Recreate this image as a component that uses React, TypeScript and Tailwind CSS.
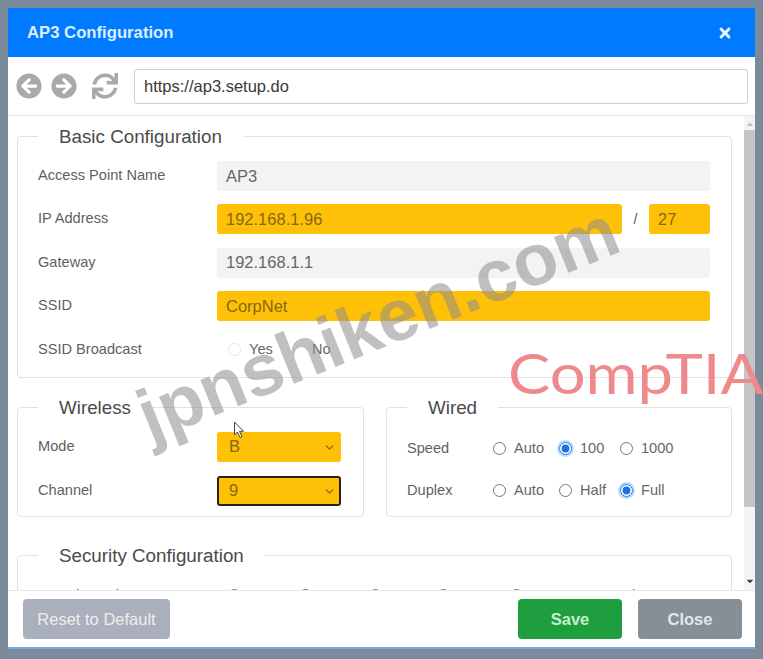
import { ChevronDown } from 'lucide-react';
import { FaArrowCircleLeft, FaArrowCircleRight, FaSync, FaTimes, FaCaretUp, FaCaretDown } from 'react-icons/fa';

const YELLOW = 'bg-[#ffc107] text-[#85680f]';

function Field({ value, className }: { value: string; className: string }) {
  return (
    <input
      readOnly
      value={value}
      className={`h-[30px] rounded-[3px] px-[9px] text-[16.5px] outline-none ${className}`}
    />
  );
}

function Row({ label, children }: { label: string; children: React.ReactNode }) {
  return (
    <div className="flex h-[30px] items-center">
      <label className="w-[179px] shrink-0 text-[14.6px] text-[#5f5f5f]">{label}</label>
      {children}
    </div>
  );
}

function Group({ title, children, className = '' }: { title: string; children: React.ReactNode; className?: string }) {
  return (
    <fieldset className={`rounded border border-[#e2e2e2] ${className}`}>
      <legend className="px-[21px] text-[18.8px] leading-[27px] text-[#4a4a4a]">{title}</legend>
      {children}
    </fieldset>
  );
}

function Radio({ label, checked, width, name, faint }: { label: string; checked?: boolean; width: string; name: string; faint?: boolean }) {
  return (
    <label className={`flex items-center gap-[8px] whitespace-nowrap text-[14.6px] text-[#666] ${width}`}>
      <span className={`flex shrink-0 rounded-full ${checked ? 'ring-2 ring-[#bcdcfb]' : ''}`}>
        <input
          type="radio"
          name={name}
          defaultChecked={checked}
          className={`m-0 size-[13px] accent-[#1a73e8] ${faint ? 'opacity-20' : ''}`}
        />
      </span>
      {label}
    </label>
  );
}

function Select({ value, focused }: { value: string; focused?: boolean }) {
  return (
    <div className="relative">
      <select
        defaultValue={value}
        className={`h-[30px] w-[124px] appearance-none rounded-[3px] text-[16.5px] outline-none ${YELLOW} ${focused ? 'border-2 border-[#2b2413] pl-[10px]' : 'pl-[12px]'}`}
      >
        <option>{value}</option>
      </select>
      <ChevronDown className="pointer-events-none absolute right-[5px] top-[9px] size-[13px] text-[#85680f]" strokeWidth={2.5} />
    </div>
  );
}

export default function App() {
  return (
    <div className="relative h-[659px] w-[763px] overflow-hidden bg-[#7b8b9b] pl-[8px] pr-[8px] pt-[8px] font-['Liberation_Sans',Arial,sans-serif]">
      <div className="flex h-[641px] flex-col overflow-hidden border-b-2 border-[#74abdc] bg-white">
        <header className="flex h-[49px] shrink-0 items-center justify-between bg-[#007bff] pl-[19px] pr-[22px]">
          <h1 className="text-[16.7px] font-bold text-[#dcefff]">AP3 Configuration</h1>
          <FaTimes className="size-[16px] text-[#eef6ff]" />
        </header>

        <div className="flex h-[59px] shrink-0 items-center border-b border-[#e5e5e5] pl-[8px] pr-[7px]">
          <FaArrowCircleLeft className="size-[26px] text-[#a9a9a9]" />
          <FaArrowCircleRight className="ml-[9px] size-[26px] text-[#a9a9a9]" />
          <FaSync className="ml-[15px] size-[26px] text-[#a9a9a9]" />
          <input
            readOnly
            value="https://ap3.setup.do"
            className="ml-[16px] h-[35px] flex-1 rounded-[3px] border border-[#cfcfcf] px-[9px] text-[16.5px] text-[#3a3a3a] outline-none"
          />
        </div>

        <div className="flex min-h-0 flex-1">
          <div className="min-w-0 flex-1 overflow-hidden pl-[9px] pr-[12px] pt-[7px]">
            <Group title="Basic Configuration" className="pb-[12px] pl-[20px] pr-[21px] pt-[11px]">
              <div className="flex flex-col gap-[13.4px]">
                <Row label="Access Point Name">
                  <Field value="AP3" className="flex-1 bg-[#f3f3f3] text-[#666]" />
                </Row>
                <Row label="IP Address">
                  <Field value="192.168.1.96" className={`w-[405px] ${YELLOW}`} />
                  <span className="w-[27px] text-center text-sm text-[#555]">/</span>
                  <Field value="27" className={`w-[61px] ${YELLOW}`} />
                </Row>
                <Row label="Gateway">
                  <Field value="192.168.1.1" className="flex-1 bg-[#f3f3f3] text-[#666]" />
                </Row>
                <Row label="SSID">
                  <Field value="CorpNet" className={`flex-1 ${YELLOW}`} />
                </Row>
                <Row label="SSID Broadcast">
                  <div className="flex pl-[11px]">
                    <Radio name="broadcast" label="Yes" width="w-[84px]" faint />
                    <span className="text-[14.6px] text-[#666]">No</span>
                  </div>
                </Row>
              </div>
            </Group>

            <div className="mt-[16px] grid grid-cols-[347px_346px] gap-[22px]">
              <Group title="Wireless" className="px-[20px] pb-[10px] pt-[11px]">
                <div className="flex flex-col gap-[14px]">
                  <Row label="Mode"><Select value="B" /></Row>
                  <Row label="Channel"><Select value="9" focused /></Row>
                </div>
              </Group>
              <Group title="Wired" className="px-[20px] pb-[8px] pt-[13px]">
                <div className="flex flex-col gap-[12px]">
                  <Row label="Speed">
                    <div className="-ml-[93px] flex">
                      <Radio name="speed" label="Auto" width="w-[66px]" />
                      <Radio name="speed" label="100" width="w-[61px]" checked />
                      <Radio name="speed" label="1000" width="w-[60px]" />
                    </div>
                  </Row>
                  <Row label="Duplex">
                    <div className="-ml-[93px] flex">
                      <Radio name="duplex" label="Auto" width="w-[66px]" />
                      <Radio name="duplex" label="Half" width="w-[61px]" />
                      <Radio name="duplex" label="Full" width="w-[60px]" checked />
                    </div>
                  </Row>
                </div>
              </Group>
            </div>

            <Group title="Security Configuration" className="mt-[25px] px-[20px] pb-[13px] pt-[12px]">
              <Row label="Security Style">
                <div className="flex pl-[11px]">
                  <Radio name="style" label="None" width="w-[71px]" />
                  <Radio name="style" label="WEP" width="w-[70px]" />
                  <Radio name="style" label="WPA" width="w-[68px]" />
                  <Radio name="style" label="WPA2" width="w-[73px]" />
                  <Radio name="style" label="WPA2 - Enterprise" width="w-[130px]" />
                </div>
              </Row>
            </Group>
          </div>

          <div className="flex w-[11px] shrink-0 flex-col items-center bg-[#f4f4f4]">
            <FaCaretUp className="mt-[3px] size-[10px] text-[#bdbdbd]" />
            <div className="mt-[1px] h-[377px] w-full bg-[#c6c4c4]" />
            <FaCaretDown className="mt-[69px] size-[10px] text-[#444]" />
          </div>
        </div>

        <footer className="flex h-[57px] shrink-0 items-center border-t border-[#e8e8e8] pl-[15px] pr-[13px]">
          <button className="h-[40px] w-[147px] rounded bg-[#aab0bb] text-[16.5px] text-[#eceef1]">Reset to Default</button>
          <button className="ml-auto h-[40px] w-[104px] rounded bg-[#1f9e3f] text-[16.5px] font-bold text-[#c3f0cd]">Save</button>
          <button className="ml-[16px] h-[40px] w-[104px] rounded bg-[#868e96] text-[16.5px] font-bold text-[#e4e7ea]">Close</button>
        </footer>
      </div>

      {/* watermarks sit over the form */}
      <div className="pointer-events-none absolute left-[122px] top-[286px] origin-center -rotate-[22deg] whitespace-nowrap text-[73px] font-bold leading-none text-[#8c8c8c]/55">
        jpnshiken.com
      </div>
      <div className="pointer-events-none absolute left-[508px] top-[345px] origin-left scale-x-[1.13] whitespace-nowrap font-['Lato',sans-serif] text-[56px] font-normal leading-none text-[#ee8a8c]">
        CompTIA
      </div>
      <svg className="pointer-events-none absolute left-[233px] top-[421px]" width="12" height="18" viewBox="0 0 12 18">
        <path d="M1.5 1v13l3-3 2.5 5.5 2-1-2.5-5.2h4z" fill="#fff" stroke="#444" strokeWidth="1" />
      </svg>
    </div>
  );
}
